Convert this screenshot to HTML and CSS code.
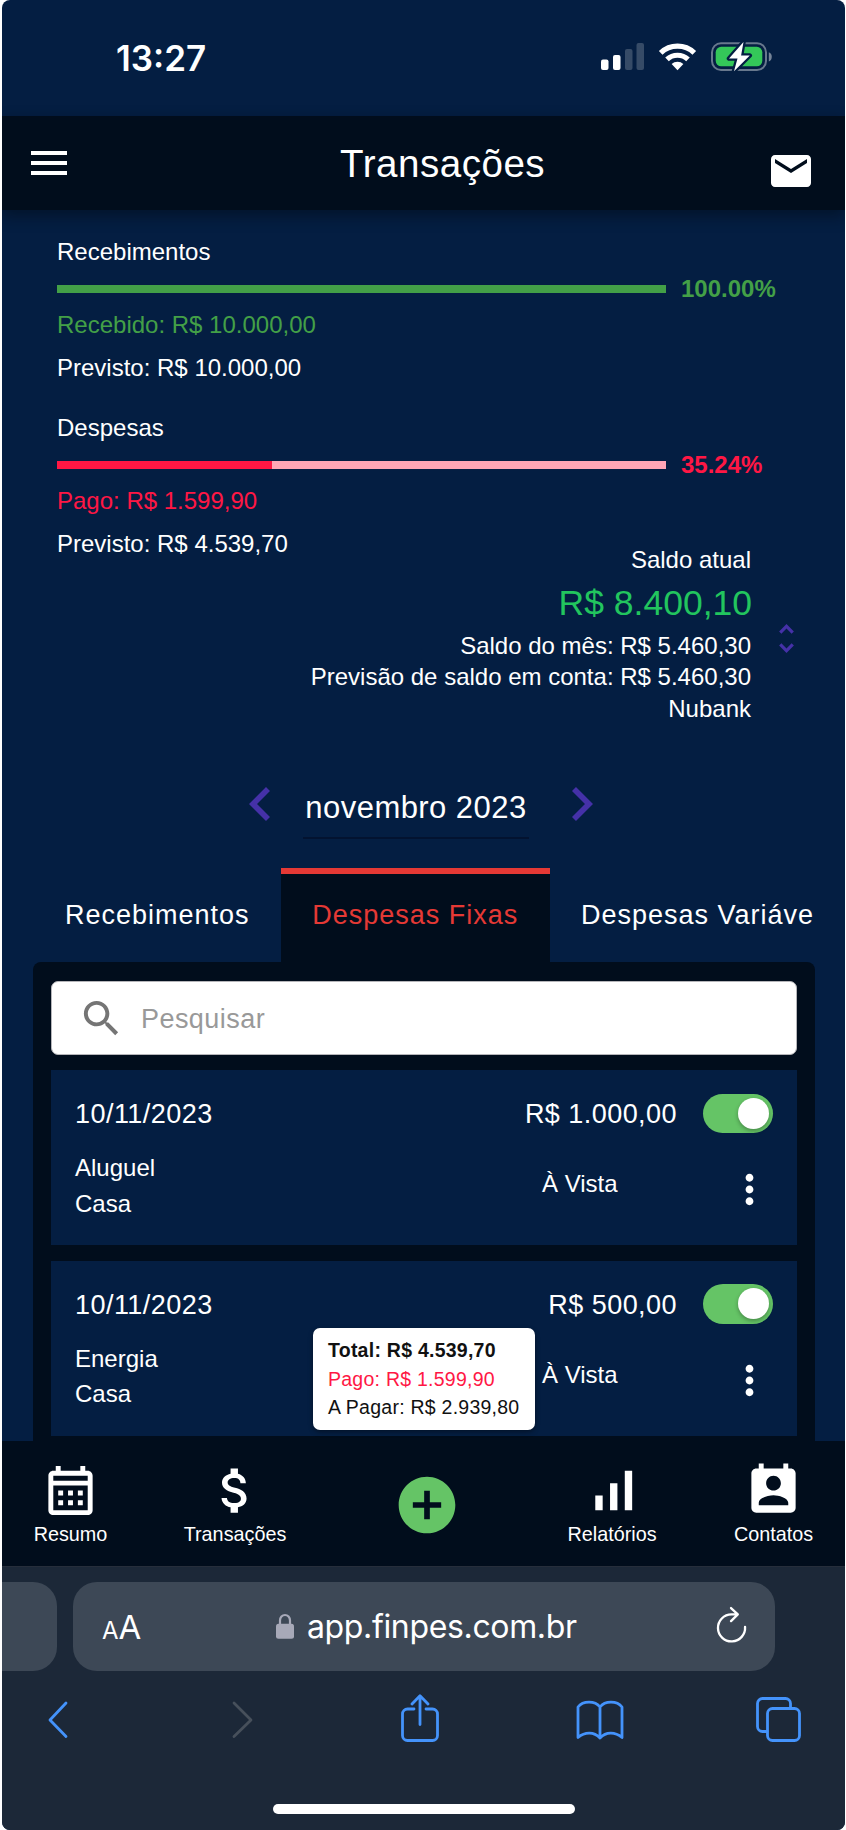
FILE: index.html
```html
<!DOCTYPE html>
<html lang="pt-BR">
<head>
<meta charset="utf-8">
<title>Transações</title>
<link rel="stylesheet" href="styles.css">
</head>
<body>
<div class="phone">
  <header class="status">
    <span class="clock">13:27</span>
    <svg class="status-icons" width="172" height="32" viewBox="600 41 172 32">
      <g fill="#fff">
        <rect x="601" y="59.5" width="7.5" height="10.5" rx="2"/>
        <rect x="613" y="55" width="7.5" height="15" rx="2"/>
        <rect x="625" y="49" width="7.5" height="21" rx="2" opacity=".2"/>
        <rect x="636.5" y="43" width="7.5" height="27" rx="2" opacity=".2"/>
        <path d="M677.5 70.2l-5.9-6.2a8.6 8.6 0 0 1 11.8 0z"/>
      </g>
      <g fill="none" stroke="#fff" stroke-width="5.2">
        <path d="M667 59.4a15.3 15.3 0 0 1 21 0"/>
        <path d="M660.7 52.8a24.4 24.4 0 0 1 33.6 0"/>
      </g>
      <rect x="712" y="43.2" width="54" height="26.8" rx="9" fill="none" stroke="#fff" stroke-opacity=".4" stroke-width="2"/>
      <path d="M768.8 52.2c4 1 4 8.300 0 9.300z" fill="#fff" opacity=".45"/>
      <rect x="715.700" y="46.800" width="46.600" height="19.500" rx="5.500" fill="#34c759"/>
      <path d="M743.500 42L729 58.600h8.500L734 71.200L749.800 55.500h-8.700z" fill="#fff" stroke="#041e42" stroke-width="4.500" stroke-linejoin="round" paint-order="stroke"/>
    </svg>
  </header>

  <div class="appbar">
    <svg class="icon-menu" viewBox="0 0 24 24"><path d="M3 18h18v-2H3v2zm0-5h18v-2H3v2zm0-7v2h18V6H3z"/></svg>
    <h1>Transações</h1>
    <svg class="icon-mail" viewBox="0 0 24 24"><path d="M20 4H4c-1.100 0-1.990.9-1.990 2L2 18c0 1.100.9 2 2 2h16c1.100 0 2-.9 2-2V6c0-1.100-.9-2-2-2zm0 4l-8 5-8-5V6l8 5 8-5v2z"/></svg>
  </div>

  <main class="content">
    <section class="summary">
      <p>Recebimentos</p>
      <div class="meter income"><div class="track"><div class="fill" style="width:100%"></div></div><b>100.00%</b></div>
      <p class="done green">Recebido: R$ 10.000,00</p>
      <p class="planned">Previsto: R$ 10.000,00</p>
      <p class="second">Despesas</p>
      <div class="meter expense"><div class="track"><div class="fill" style="width:35.24%"></div></div><b>35.24%</b></div>
      <p class="done red">Pago: R$ 1.599,90</p>
      <p class="planned">Previsto: R$ 4.539,70</p>
    </section>

    <section class="balance">
      <div class="balance-text">
        <p>Saldo atual</p>
        <p class="amount-now">R$ 8.400,10</p>
        <p>Saldo do mês: R$ 5.460,30</p>
        <p>Previsão de saldo em conta: R$ 5.460,30</p>
        <p>Nubank</p>
      </div>
      <svg class="unfold" viewBox="7.410 3 9.180 18"><path d="M12 5.830L15.170 9l1.410-1.410L12 3 7.410 7.590 8.830 9 12 5.830zm0 12.340L8.830 15l-1.410 1.410L12 21l4.590-4.590L15.170 15 12 18.170z"/></svg>
    </section>

    <section class="month">
      <svg viewBox="8 6 7.410 12"><path d="M15.410 7.410 14 6l-6 6 6 6 1.410-1.410L10.830 12z"/></svg>
      <span>novembro 2023</span>
      <svg viewBox="8.590 6 7.410 12"><path d="M10 6 8.590 7.410 13.170 12l-4.580 4.590L10 18l6-6z"/></svg>
    </section>

    <nav class="tabs">
      <span class="tab">Recebimentos</span>
      <span class="tab active">Despesas Fixas</span>
      <span class="tab last">Despesas Variáve</span>
    </nav>

    <section class="panel">
      <div class="search">
        <svg viewBox="0 0 24 24"><path d="M15.500 14h-.790l-.280-.270C15.410 12.590 16 11.110 16 9.500 16 5.910 13.090 3 9.500 3S3 5.910 3 9.500 5.910 16 9.500 16c1.610 0 3.090-.590 4.230-1.570l.270.280v.790l5 4.990L20.490 19l-4.990-5zm-6 0C7.010 14 5 11.990 5 9.500S7.010 5 9.500 5 14 7.010 14 9.500 11.990 14 9.500 14z"/></svg>
        <span>Pesquisar</span>
      </div>
      <article class="card">
        <div class="row"><span class="date">10/11/2023</span><span class="value">R$ 1.000,00</span><i class="toggle"></i></div>
        <div class="details">
          <div class="names"><p>Aluguel</p><p>Casa</p></div>
          <p class="terms">À Vista</p>
          <svg viewBox="0 0 24 24"><path d="M12 8c1.100 0 2-.9 2-2s-.9-2-2-2-2 .9-2 2 .9 2 2 2zm0 2c-1.100 0-2 .9-2 2s.9 2 2 2 2-.9 2-2-.9-2-2-2zm0 6c-1.100 0-2 .9-2 2s.9 2 2 2 2-.9 2-2-.9-2-2-2z"/></svg>
        </div>
      </article>
      <article class="card">
        <div class="row"><span class="date">10/11/2023</span><span class="value">R$ 500,00</span><i class="toggle"></i></div>
        <div class="details">
          <div class="names"><p>Energia</p><p>Casa</p></div>
          <p class="terms">À Vista</p>
          <svg viewBox="0 0 24 24"><path d="M12 8c1.100 0 2-.9 2-2s-.9-2-2-2-2 .9-2 2 .9 2 2 2zm0 2c-1.100 0-2 .9-2 2s.9 2 2 2 2-.9 2-2-.9-2-2-2zm0 6c-1.100 0-2 .9-2 2s.9 2 2 2 2-.9 2-2-.9-2-2-2z"/></svg>
        </div>
      </article>
    </section>
    <aside class="totals">
      <p><b>Total: R$ 4.539,70</b></p>
      <p class="red">Pago: R$ 1.599,90</p>
      <p>A Pagar: R$ 2.939,80</p>
    </aside>
  </main>

  <nav class="bottom-nav">
    <div class="nav-item">
      <svg viewBox="0 0 24 24"><path d="M19 4h-1V2h-2v2H8V2H6v2H5c-1.110 0-1.990.9-1.990 2L3 20c0 1.100.890 2 2 2h14c1.100 0 2-.9 2-2V6c0-1.100-.9-2-2-2zm0 16H5V10h14v10zm0-12H5V6h14v2zM9 14H7v-2h2v2zm4 0h-2v-2h2v2zm4 0h-2v-2h2v2zm-8 4H7v-2h2v2zm4 0h-2v-2h2v2zm4 0h-2v-2h2v2z"/></svg>
      <span>Resumo</span>
    </div>
    <div class="nav-item">
      <svg viewBox="0 0 24 24"><path d="M11.800 10.900c-2.270-.590-3-1.200-3-2.150 0-1.090 1.010-1.850 2.700-1.850 1.780 0 2.440.850 2.500 2.100h2.210c-.070-1.720-1.120-3.300-3.210-3.810V3h-3v2.160c-1.940.420-3.500 1.680-3.500 3.610 0 2.310 1.910 3.460 4.700 4.130 2.500.6 3 1.480 3 2.410 0 .690-.490 1.790-2.700 1.790-2.060 0-2.870-.920-2.980-2.100h-2.200c.120 2.190 1.760 3.420 3.680 3.830V21h3v-2.150c1.950-.370 3.500-1.500 3.500-3.550 0-2.840-2.430-3.810-4.700-4.400z"/></svg>
      <span>Transações</span>
    </div>
    <div class="nav-add">
      <svg viewBox="0 0 24 24"><path d="M12 2C6.480 2 2 6.480 2 12s4.480 10 10 10 10-4.480 10-10S17.520 2 12 2zm5 11h-4v4h-2v-4H7v-2h4V7h2v4h4v2z"/></svg>
    </div>
    <div class="nav-item">
      <svg viewBox="0 0 24 24"><path d="M17 4h3v16h-3zM5 14h3v6H5zm6-5h3v11h-3z"/></svg>
      <span>Relatórios</span>
    </div>
    <div class="nav-item">
      <svg viewBox="0 0 24 24"><path d="M19 3h-1V1h-2v2H8V1H6v2H5c-1.110 0-2 .9-2 2v14c0 1.100.890 2 2 2h14c1.100 0 2-.9 2-2V5c0-1.100-.9-2-2-2zm-7 3c1.660 0 3 1.340 3 3s-1.340 3-3 3-3-1.340-3-3 1.340-3 3-3zm6 12H6v-1c0-2 4-3.100 6-3.100s6 1.100 6 3.100v1z"/></svg>
      <span>Contatos</span>
    </div>
  </nav>

  <footer class="browser">
    <div class="address-row">
      <div class="previous"></div>
      <div class="address">
        <span class="text-size"><small>A</small>A</span>
        <svg class="lock" viewBox="0 0 18 26"><path d="M4 12V7.500a5 5.500 0 0 1 10 0V12" fill="none" stroke="#a7a9b8" stroke-width="2.200"/><rect y="10.700" width="18" height="15" rx="2.500" fill="#a7a9b8"/></svg>
        <span class="url">app.finpes.com.br</span>
        <svg class="reload" viewBox="0 0 32 38"><path d="M30 21.500A14 14 0 1 1 16 8.500h5.500M15.500 2l7 6.500-7 7" fill="none" stroke="#fff" stroke-width="2.400" stroke-linecap="round" stroke-linejoin="round"/></svg>
      </div>
    </div>
    <div class="tools">
      <svg width="22" height="38" viewBox="0 0 22 38"><path d="M19 2L3 19l16 16.500"/></svg>
      <svg class="disabled" width="22" height="38" viewBox="0 0 22 38"><path d="M3 2l17 17-17 16.500"/></svg>
      <svg class="share" width="38" height="48" viewBox="0 0 38 48"><path d="M13 15H6.500a5 5 0 0 0-5 5v21.500a5 5 0 0 0 5 5h25a5 5 0 0 0 5-5V20a5 5 0 0 0-5-5H25M19 30.500V2M11 10l8-8.300 8 8.300"/></svg>
      <svg class="book" width="48" height="40" viewBox="0 0 48 40"><path d="M24 7C19 .5 7 .5 2 7v30.500c7-5.800 16-5.800 22 .5 6-6.300 15-6.300 22-.5V7C41 .5 29 .5 24 7zv31"/></svg>
      <svg class="windows" width="45" height="45" viewBox="0 0 45 45"><path d="M11 34.500H6.500a5 5 0 0 1-5-5v-23a5 5 0 0 1 5-5h23a5 5 0 0 1 5 5V10"/><rect x="11.500" y="11.500" width="32" height="32" rx="5"/></svg>
    </div>
    <div class="home-bar"></div>
  </footer>
</div>
</body>
</html>
```

FILE: styles.css
```css
* { box-sizing: border-box; }
body { margin: 0; background: #fff; }
p, h1 { margin: 0; font-weight: 400; }
svg { display: block; flex: none; fill: currentColor; }

.phone {
  width: 843px;
  height: 1830px;
  margin-left: 2px;
  display: flex;
  flex-direction: column;
  overflow: hidden;
  border-radius: 8px;
  background: #041e42;
  color: #fff;
  font-family: "Liberation Sans", Arial, sans-serif;
  font-size: 24px;
  line-height: 28px;
}
.green { color: #43a047; }
.red { color: #ff1744; }

.status {
  flex: none;
  height: 115.5px;
  display: flex;
  justify-content: space-between;
  padding: 37px 73px 0 114px;
}
.clock {
  margin-top: 1px;
  font: 600 35px/40px Inter, sans-serif;
  letter-spacing: 0;
}
.status-icons { margin-top: 4px; }

.appbar {
  flex: none;
  height: 94.500px;
  display: flex;
  padding: 0 30px 0 23px;
  background: #010d1c;
  box-shadow: 0 6px 14px rgba(0, 8, 16, .45);
  z-index: 1;
}
.appbar svg { width: 48px; height: 48px; }
.icon-menu { margin-top: 23.500px; }
.icon-mail { margin: 31.500px 0 0 auto; }
.appbar h1 {
  font-size: 38.600px;
  line-height: 48px;
  letter-spacing: 0.5px;
  margin: 24px 0 0 267px;
}

.content {
  flex: none;
  height: 1231px;
  position: relative;
  display: flex;
  flex-direction: column;
}
.summary { padding: 28px 55px 0; }
.meter {
  display: flex;
  align-items: center;
  gap: 15px;
  margin-top: 9px;
}
.track { width: 609px; height: 8px; }
.fill { height: 100%; }
.income { color: #43a047; }
.income .fill { background: #43a047; }
.expense { color: #ff1744; }
.expense .track { background: #ffa6b6; }
.expense .fill { background: #ff1744; }
.done { margin-top: 8px; }
.planned { margin-top: 15px; }
.second { margin-top: 32px; }

.balance {
  display: flex;
  justify-content: flex-end;
  gap: 28px;
  margin-top: -14px;
  padding-right: 51px;
  text-align: right;
  line-height: 31.700px;
}
.balance .amount-now {
  margin-right: -1px;
  font-size: 35.500px;
  line-height: 54px;
  color: #22c55e;
}
.unfold { width: 15px; height: 29px; margin-top: 80px; color: #4531a8; }

.month {
  display: flex;
  width: 344px;
  margin: 62px 0 0 247px;
  justify-content: space-between;
}
.month svg { width: 21px; height: 34px; color: #4531a8; }
.month span {
  width: 226px;
  height: 52px;
  margin-right: 10px;
  text-align: center;
  font-size: 31px;
  line-height: 42px;
  letter-spacing: 0.45px;
  white-space: nowrap;
  border-bottom: 2px solid #031330;
}

.tabs {
  display: flex;
  height: 94px;
  margin: 29px 31px 0;
  font-size: 27px;
  line-height: 94px;
  letter-spacing: 1px;
  white-space: nowrap;
}
.tab { width: 248px; padding-left: 32px; }
.tab.active {
  width: 270px;
  padding: 0;
  text-align: center;
  line-height: 82px;
  color: #e53935;
  background: #010d1c;
  border-top: 6px solid #e53935;
}
.tab.last { width: 264px; padding-left: 31px; }

.panel {
  flex: 1;
  min-height: 0;
  overflow: hidden;
  margin: 0 30.500px 0 31px;
  padding: 19.500px 17.500px 0 18px;
  border-radius: 8px 8px 0 0;
  background: #010d1c;
}
.search {
  height: 73.500px;
  display: flex;
  align-items: center;
  gap: 16px;
  padding-left: 26px;
  border: 1px solid #b5b5b9;
  border-radius: 7px;
  background: #fff;
  color: #999;
  font-size: 27px;
  letter-spacing: 0.45px;
}
.search svg { width: 47px; height: 47px; color: #757575; }
.search span { padding-top: 2px; }

.card {
  height: 175px;
  margin-top: 15.500px;
  padding: 23px 24px 0 24px;
  background: #041e42;
}
.row {
  display: flex;
  align-items: center;
  height: 40px;
  font-size: 27px;
  letter-spacing: 0.45px;
}
.date, .value { padding-top: 2px; }
.value { margin-left: auto; margin-right: 26px; }
.toggle {
  width: 70px;
  height: 39.500px;
  border-radius: 20px;
  background: #65c466;
  display: flex;
  align-items: center;
  justify-content: flex-end;
  padding-right: 4px;
}
.toggle::after {
  content: "";
  width: 31px;
  height: 31px;
  border-radius: 50%;
  background: #fff;
  box-shadow: 0 2px 4px rgba(0, 0, 0, .3);
}
.details { display: flex; align-items: flex-start; }
.names { width: 467px; margin-top: 17px; line-height: 35.500px; }
.terms { margin-top: 37px; width: 184px; }
.details svg { width: 47px; height: 47px; margin-top: 33px; }

.totals {
  position: absolute;
  left: 311px;
  top: 1118px;
  width: 222px;
  height: 101.500px;
  padding: 8px 0 0 15px;
  border-radius: 7px;
  background: #fff;
  color: #111;
  font-size: 19.500px;
  line-height: 28.500px;
  letter-spacing: 0.25px;
  white-space: nowrap;
  box-shadow: 0 2px 5px rgba(0, 0, 0, .4);
}
.totals .red { color: #ff1744; }

.bottom-nav {
  flex: none;
  height: 125px;
  display: grid;
  grid-template-columns: 137px 192px 192px 178px 145px;
  background: #010d1c;
  font-size: 19.800px;
  line-height: 24px;
}
.nav-item {
  display: flex;
  flex-direction: column;
  align-items: center;
  padding-top: 20px;
}
.nav-item svg { width: 59px; height: 59px; }
.nav-item span { margin-top: 2px; }
.nav-add { display: flex; justify-content: center; padding-top: 30px; color: #65c466; }
.nav-add svg { width: 68px; height: 68px; }

.browser {
  flex: 1;
  padding-top: 15px;
  border-top: 1px solid #262e3b;
  background: #1c2838;
}
.address-row { display: flex; gap: 16px; height: 88.500px; }
.previous { width: 55px; background: #3d4856; border-radius: 0 24px 24px 0; }
.address {
  width: 702px;
  display: flex;
  align-items: flex-start;
  padding: 0 28px 0 29px;
  border-radius: 24px;
  background: #3d4856;
  font-family: Inter, sans-serif;
  line-height: 90px;
}
.text-size { width: 174px; font-size: 33px; }
.text-size small { font-size: 24px; }
.lock { width: 18px; height: 26px; margin-top: 31px; }
.url { font-size: 32px; margin-left: 13px; letter-spacing: -0.35px; }
.reload { width: 31px; height: 37px; margin: 24px 0 0 auto; }
.tools {
  display: flex;
  align-items: center;
  height: 98px;
  padding-left: 45px;
  color: #4493fb;
}
.tools svg {
  fill: none;
  stroke: currentColor;
  stroke-width: 2.800px;
  stroke-linecap: round;
  stroke-linejoin: round;
}
.tools .disabled { margin-left: 162px; color: #47505b; }
.tools .share { margin-left: 148px; margin-top: -4px; }
.tools .book { margin-left: 137px; }
.tools .windows { margin-left: 132px; }
.home-bar {
  width: 302px;
  height: 10.500px;
  margin: 35px 0 0 271px;
  border-radius: 6px;
  background: #fff;
}
```
